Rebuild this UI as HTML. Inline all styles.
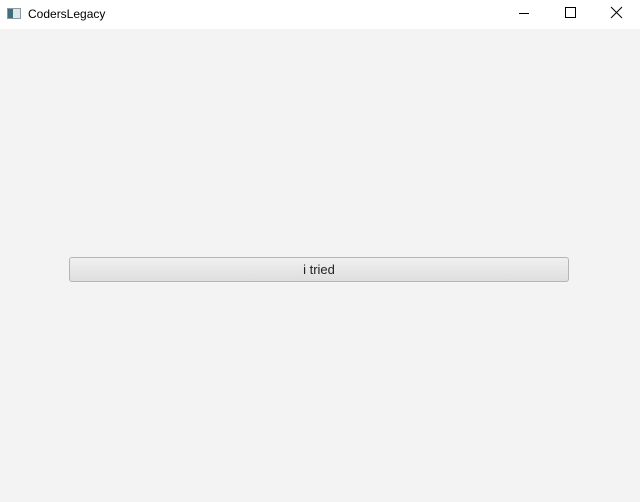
<!DOCTYPE html>
<html><head><style>
body{margin:0;width:640px;height:502px;background:#f3f3f3;font-family:"Liberation Sans",sans-serif;position:relative;overflow:hidden}
.tb{position:absolute;left:0;top:0;width:640px;height:29px;background:#fff}
.t{position:absolute;left:28px;top:7px;font-size:12px;color:#000}
.ic{position:absolute;left:7px;top:8px;width:14px;height:11px;border:1px solid #8a9aa0;box-sizing:border-box;background:linear-gradient(90deg,#3d6f7a 0 5px,#dfe6e8 5px)}
.btn{position:absolute;left:69px;top:257px;width:500px;height:25px;box-sizing:border-box;border:1px solid #b5b5b5;border-radius:3px;background:linear-gradient(#f0f0f0,#dedede);text-align:center;font-size:13px;line-height:23px;color:#222}
</style></head><body>
<div class="tb"><div class="ic"></div><div class="t">CodersLegacy</div>
<svg style="position:absolute;left:515px;top:6px" width="115" height="14">
<line x1="4" y1="7.5" x2="14" y2="7.5" stroke="#000"/>
<rect x="50.5" y="1.5" width="10" height="10" fill="none" stroke="#000"/>
<path d="M96 1L107 12M107 1L96 12" stroke="#000"/>
</svg></div>
<div class="btn">i tried</div>
</body></html>
